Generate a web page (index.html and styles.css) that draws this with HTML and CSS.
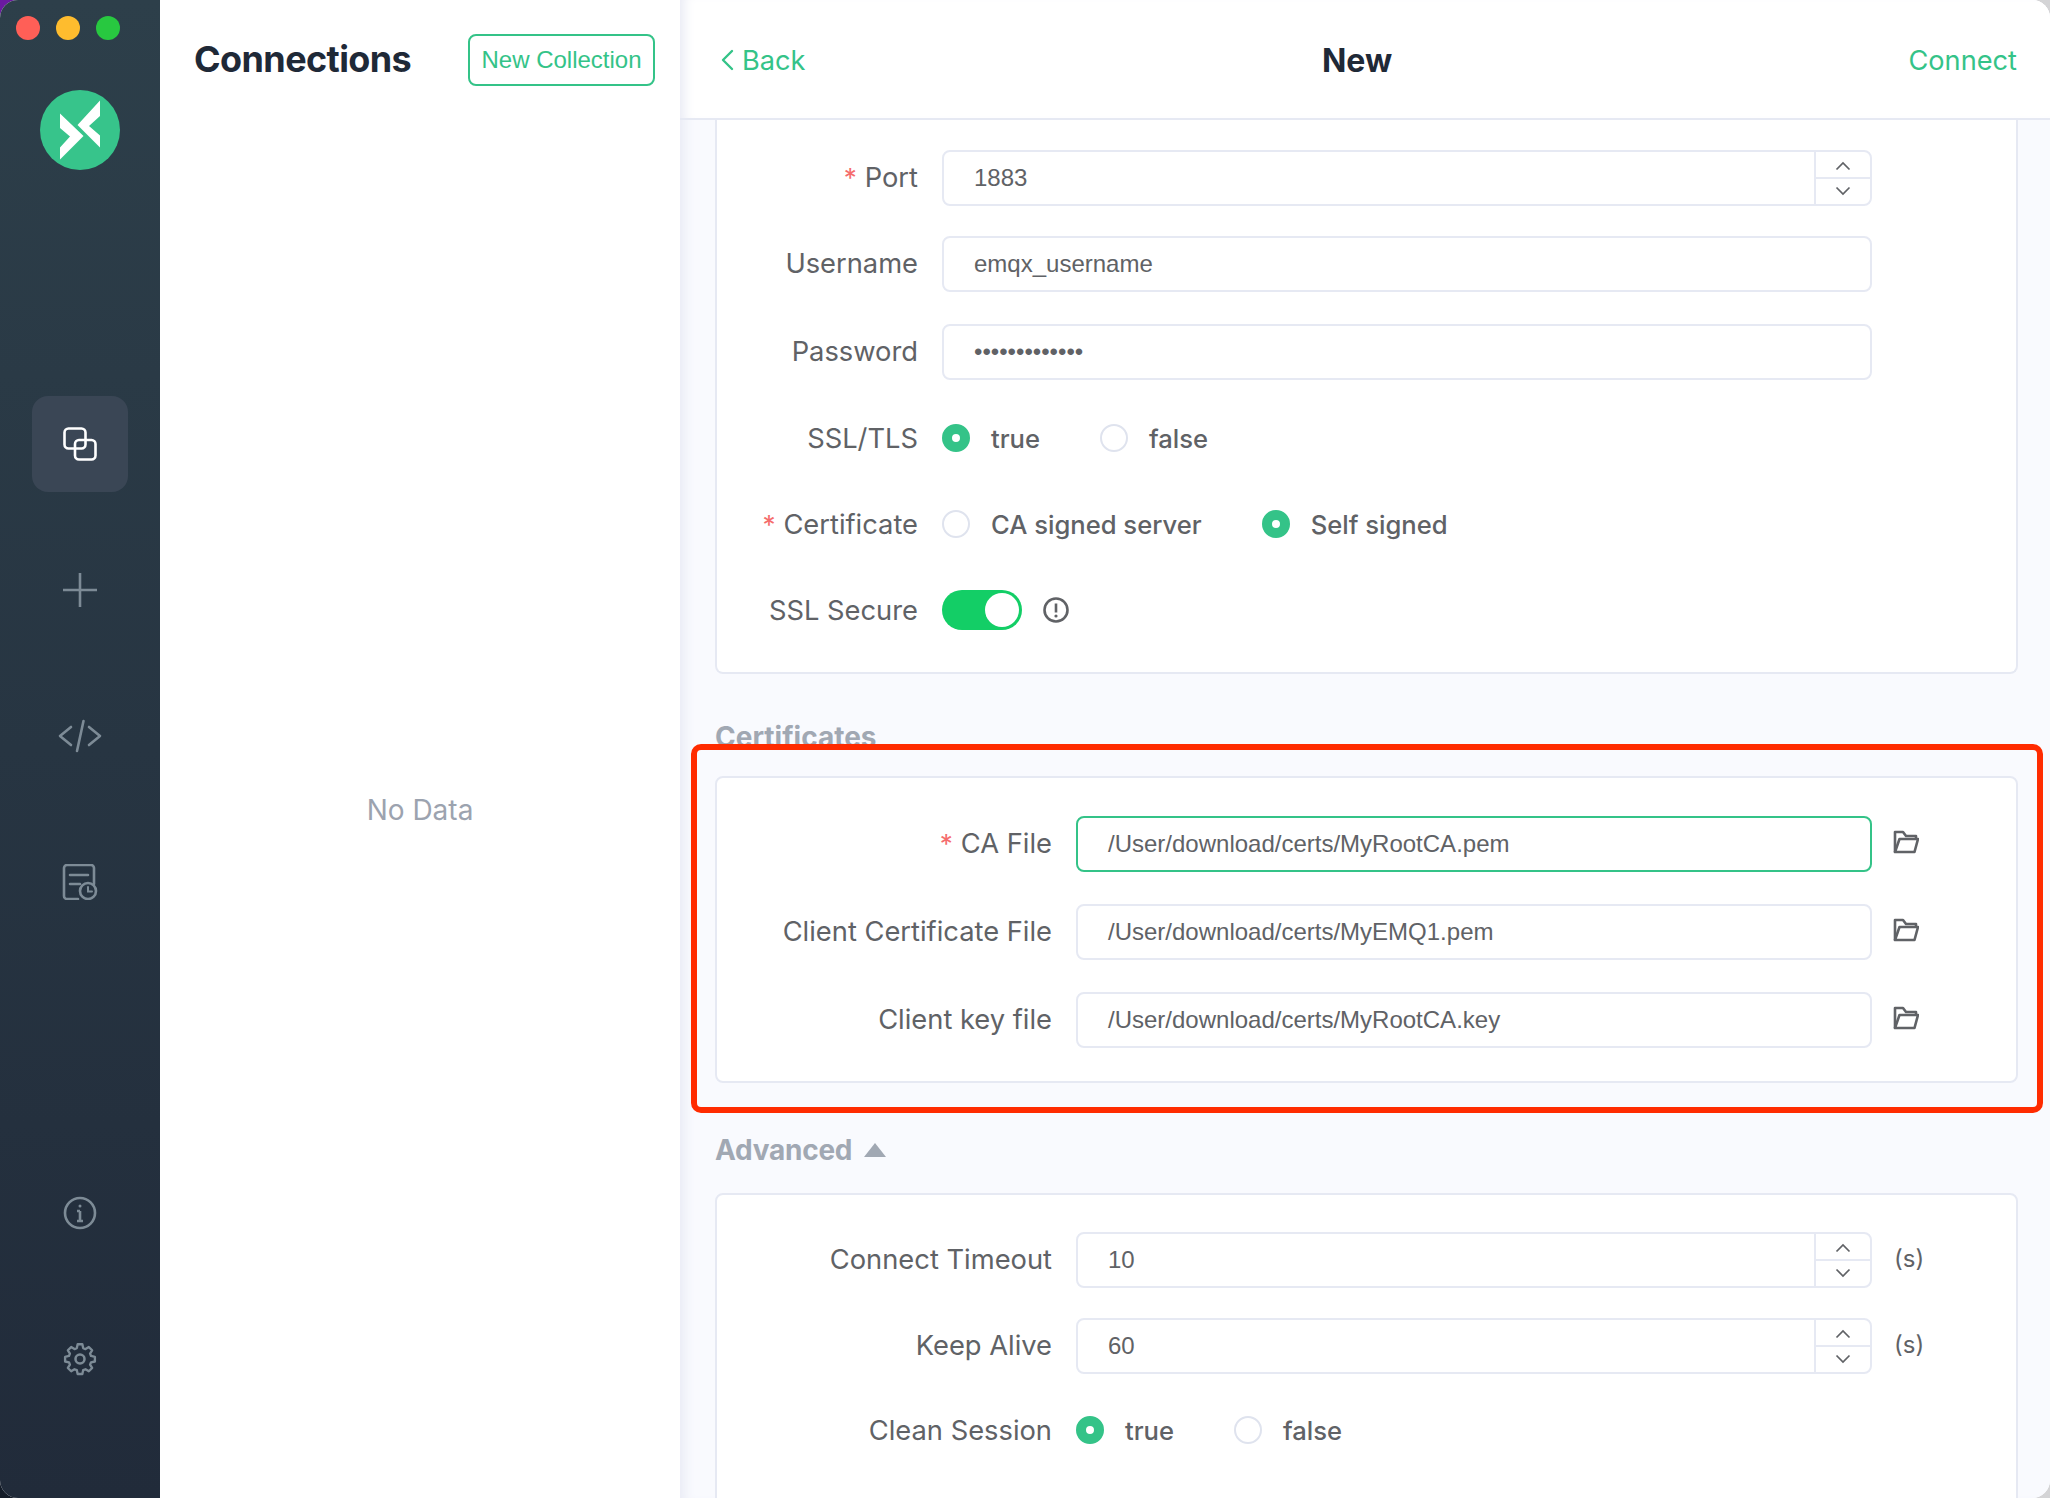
FILE: index.html
```html
<!DOCTYPE html>
<html lang="en">
<head>
<meta charset="utf-8">
<title>MQTT X - New Connection</title>
<link rel="stylesheet" href="styles.css">
</head>
<body>
<div class="window">
  <aside class="sidebar">
    <div class="traffic">
      <span class="light red"></span><span class="light amber"></span><span class="light green"></span>
    </div>
    <div class="logo">
      <svg viewBox="0 0 80 80" width="80" height="80">
        <circle cx="40" cy="40" r="40" fill="#37c48b"/>
        <path d="M20 23.500 43.500 46 20 69.500V57.500L30 46.500 20 38z" fill="#fff"/>
        <path d="M60 10.500V26L49 36 60 45.500V57.500L37.500 35z" fill="#fff"/>
      </svg>
    </div>
    <nav class="nav-top">
      <div class="nav-item active">
        <svg viewBox="0 0 34 34" width="34" height="34" fill="none" stroke="#fff" stroke-width="2.600">
          <rect x="1.500" y="1.500" width="21" height="20" rx="4"/>
          <rect x="12" y="13" width="20.500" height="19.500" rx="4"/>
        </svg>
      </div>
      <div class="nav-item">
        <svg viewBox="0 0 36 36" width="36" height="36" fill="none" stroke="#7d8b96" stroke-width="2.600">
          <path d="M1 18H35M18 1V35"/>
        </svg>
      </div>
      <div class="nav-item">
        <svg viewBox="0 0 44 34" width="44" height="34" fill="none" stroke="#7d8b96" stroke-width="2.600" stroke-linecap="round" stroke-linejoin="round">
          <path d="M13 8 2 17l11 9M31 8l11 9-11 9M25.500 2 19 32"/>
        </svg>
      </div>
      <div class="nav-item">
        <svg viewBox="0 0 36 36" width="36" height="36" fill="none" stroke="#7d8b96" stroke-width="2.600" stroke-linecap="round">
          <path d="M16 35H5a3 3 0 0 1-3-3V4a3 3 0 0 1 3-3h24a3 3 0 0 1 3 3v16"/>
          <path d="M8 11H26M8 20H18"/>
          <circle cx="26" cy="27" r="8"/>
          <path d="M26 23v4.500h4" stroke-width="2"/>
        </svg>
      </div>
    </nav>
    <nav class="nav-bottom">
      <div class="nav-item">
        <svg viewBox="0 0 34 34" width="34" height="34" fill="none" stroke="#7d8b96" stroke-width="2.600">
          <circle cx="17" cy="17" r="15"/>
          <path d="M17 15V25M14 25H20M14 15H17"/>
          <circle cx="17" cy="10" r="1.500" fill="#7d8b96" stroke="none"/>
        </svg>
      </div>
      <div class="nav-item">
        <svg viewBox="0 0 24 24" width="36" height="36" fill="none" stroke="#7d8b96" stroke-width="1.700" stroke-linejoin="round">
          <path d="M10.300 2.500h3.400l.6 2.800 1.700.7 2.400-1.500 2.400 2.400-1.500 2.400.7 1.700 2.800.6v3.400l-2.800.6-.7 1.700 1.500 2.400-2.400 2.400-2.400-1.500-1.700.7-.6 2.800h-3.400l-.6-2.800-1.700-.7-2.400 1.500-2.400-2.400 1.500-2.400-.7-1.700-2.800-.6v-3.400l2.800-.6.7-1.700-1.500-2.400 2.400-2.400 2.400 1.500 1.700-.7z" transform="translate(12 12) scale(.92) translate(-12 -13.200)"/>
          <circle cx="12" cy="12" r="3"/>
        </svg>
      </div>
    </nav>
  </aside>

  <section class="list-panel">
    <header class="list-head">
      <h1 class="list-title">Connections</h1>
      <button class="outline-btn" type="button">New Collection</button>
    </header>
    <div class="empty">No Data</div>
  </section>

  <main class="main">
    <header class="topbar">
      <a class="back">
        <svg viewBox="0 0 14 22" width="14" height="22" fill="none" stroke="#34c388" stroke-width="2.400" stroke-linecap="round" stroke-linejoin="round"><path d="M12 2 3 11l9 9"/></svg>
        Back
      </a>
      <div class="topbar-title">New</div>
      <a class="connect">Connect</a>
    </header>

    <div class="scroll">
      <div class="card card-first">
        <div class="row">
          <label class="label narrow"><span class="req">*</span>Port</label>
          <div class="input num"><span class="val">1883</span>
            <div class="spin">
              <span class="spin-btn"><svg viewBox="0 0 16 10" width="16" height="10" fill="none" stroke="#606266" stroke-width="1.700"><path d="M1.500 8.500 8 2l6.500 6.500"/></svg></span>
              <span class="spin-btn"><svg viewBox="0 0 16 10" width="16" height="10" fill="none" stroke="#606266" stroke-width="1.700"><path d="M1.500 1.500 8 8l6.500-6.500"/></svg></span>
            </div>
          </div>
        </div>
        <div class="row">
          <label class="label narrow">Username</label>
          <div class="input"><span class="val">emqx_username</span></div>
        </div>
        <div class="row row-tall">
          <label class="label narrow">Password</label>
          <div class="input"><span class="val">•••••••••••••</span></div>
        </div>
        <div class="row">
          <label class="label narrow">SSL/TLS</label>
          <div class="radios">
            <span class="radio on"></span><span class="radio-text">true</span>
            <span class="radio"></span><span class="radio-text">false</span>
          </div>
        </div>
        <div class="row">
          <label class="label narrow"><span class="req">*</span>Certificate</label>
          <div class="radios">
            <span class="radio"></span><span class="radio-text">CA signed server</span>
            <span class="radio on"></span><span class="radio-text">Self signed</span>
          </div>
        </div>
        <div class="row">
          <label class="label narrow">SSL Secure</label>
          <span class="switch"><span class="knob"></span></span>
          <svg class="hint" viewBox="0 0 26 26" width="26" height="26" fill="none" stroke="#606266" stroke-width="2.600"><circle cx="13" cy="13" r="11.500"/><path d="M13 6.500v9"/><circle cx="13" cy="19" r="1.600" fill="#606266" stroke="none"/></svg>
        </div>
      </div>

      <h2 class="section-title certs">Certificates</h2>
      <div class="card card-certs">
        <div class="row">
          <label class="label wide"><span class="req">*</span>CA File</label>
          <div class="input focus"><span class="val">/User/download/certs/MyRootCA.pem</span></div>
          <svg class="folder" viewBox="0 0 26 24" width="26" height="24" fill="none" stroke="#606266" stroke-width="2.600" stroke-linejoin="round"><path d="M2 22V2h8l3 4h10v3"/><path d="M2 22h19.500L25 9H6.500L2 22z"/></svg>
        </div>
        <div class="row">
          <label class="label wide">Client Certificate File</label>
          <div class="input"><span class="val">/User/download/certs/MyEMQ1.pem</span></div>
          <svg class="folder" viewBox="0 0 26 24" width="26" height="24" fill="none" stroke="#606266" stroke-width="2.600" stroke-linejoin="round"><path d="M2 22V2h8l3 4h10v3"/><path d="M2 22h19.500L25 9H6.500L2 22z"/></svg>
        </div>
        <div class="row">
          <label class="label wide">Client key file</label>
          <div class="input"><span class="val">/User/download/certs/MyRootCA.key</span></div>
          <svg class="folder" viewBox="0 0 26 24" width="26" height="24" fill="none" stroke="#606266" stroke-width="2.600" stroke-linejoin="round"><path d="M2 22V2h8l3 4h10v3"/><path d="M2 22h19.500L25 9H6.500L2 22z"/></svg>
        </div>
      </div>

      <h2 class="section-title advanced">Advanced <span class="caret"></span></h2>
      <div class="card card-adv">
        <div class="row">
          <label class="label wide">Connect Timeout</label>
          <div class="input num"><span class="val">10</span>
            <div class="spin">
              <span class="spin-btn"><svg viewBox="0 0 16 10" width="16" height="10" fill="none" stroke="#606266" stroke-width="1.700"><path d="M1.500 8.500 8 2l6.500 6.500"/></svg></span>
              <span class="spin-btn"><svg viewBox="0 0 16 10" width="16" height="10" fill="none" stroke="#606266" stroke-width="1.700"><path d="M1.500 1.500 8 8l6.500-6.500"/></svg></span>
            </div>
          </div>
          <span class="unit">(s)</span>
        </div>
        <div class="row">
          <label class="label wide">Keep Alive</label>
          <div class="input num"><span class="val">60</span>
            <div class="spin">
              <span class="spin-btn"><svg viewBox="0 0 16 10" width="16" height="10" fill="none" stroke="#606266" stroke-width="1.700"><path d="M1.500 8.500 8 2l6.500 6.500"/></svg></span>
              <span class="spin-btn"><svg viewBox="0 0 16 10" width="16" height="10" fill="none" stroke="#606266" stroke-width="1.700"><path d="M1.500 1.500 8 8l6.500-6.500"/></svg></span>
            </div>
          </div>
          <span class="unit">(s)</span>
        </div>
        <div class="row row-short">
          <label class="label wide">Clean Session</label>
          <div class="radios">
            <span class="radio on"></span><span class="radio-text">true</span>
            <span class="radio"></span><span class="radio-text">false</span>
          </div>
        </div>
      </div>
    </div>
    <div class="highlight"></div>
  </main>
</div>
</body>
</html>
```
FILE: styles.css
```css
* { box-sizing: border-box; }
html, body { margin: 0; height: 100%; }
body {
  width: 2050px;
  height: 1498px;
  overflow: hidden;
  background:
    linear-gradient(#6a1aa0, #6a1aa0) 0 0 / 20px 20px no-repeat,
    linear-gradient(#141c28, #141c28) 0 100% / 20px 20px no-repeat,
    #d4d4d6;
  font-family: Inter, "Liberation Sans", sans-serif;
  color: #606266;
}
.window {
  display: flex;
  width: 2050px;
  height: 1498px;
  border-radius: 18px;
  overflow: hidden;
  background: #fff;
}
.sidebar {
  width: 160px;
  flex: none;
  display: flex;
  flex-direction: column;
  align-items: center;
  background: linear-gradient(180deg, #2d3f4a 0%, #212b3a 100%);
}
.traffic {
  display: flex;
  gap: 16px;
  align-self: flex-start;
  padding: 16px 0 0 16px;
}
.light { width: 24px; height: 24px; border-radius: 50%; }
.red { background: #ff5f57; }
.amber { background: #febc2e; }
.green { background: #28c840; }
.logo { margin-top: 50px; height: 80px; }
.nav-top { margin-top: 226px; display: flex; flex-direction: column; gap: 50px; }
.nav-bottom { margin-top: auto; padding-bottom: 121px; display: flex; flex-direction: column; gap: 110px; }
.nav-top .nav-item { height: 96px; width: 96px; }
.nav-bottom .nav-item { width: 96px; height: 36px; }
.nav-item { display: flex; align-items: center; justify-content: center; border-radius: 16px; }
.nav-item.active { background: #3a4655; }

.list-panel {
  width: 520px;
  flex: none;
  display: flex;
  flex-direction: column;
  background: #fff;
}
.list-head {
  display: flex;
  align-items: center;
  justify-content: space-between;
  padding: 34px 25px 0 34px;
}
.list-title { margin: 0 0 2px; font-size: 36px; font-weight: 700; color: #1f2937; letter-spacing: -.6px; }
.outline-btn {
  width: 187px;
  height: 52px;
  padding: 0;
  background: #fff;
  border: 2px solid #34c388;
  border-radius: 8px;
  color: #34c388;
  font: 400 24px "Liberation Sans", Arial, sans-serif;
}
.empty { padding-top: 707px; text-align: center; font-size: 28px; color: #9ca3af; }

.main {
  flex: 1;
  min-width: 0;
  position: relative;
  display: flex;
  flex-direction: column;
  background: #f9fafe;
  box-shadow: inset 12px 0 12px -8px #e8eaf4;
}
.topbar {
  height: 120px;
  flex: none;
  display: flex;
  align-items: center;
  justify-content: space-between;
  padding: 2px 33px 0 40px;
  background: #fff;
  border-bottom: 2px solid #e6e9f3;
  box-shadow: inset 12px 0 12px -8px #e8eaf4;
  position: relative;
}
.back, .connect { color: #34c388; font-size: 27.2px; display: flex; align-items: center; gap: 8px; }
.topbar-title { position: absolute; left: 0; right: 16px; text-align: center; font-size: 32px; font-weight: 700; color: #1f2937; }
.connect { position: relative; }

.scroll { flex: 1; padding: 0 32px 0 35px; overflow: hidden; }
.card {
  background: #fff;
  border: 2px solid #e6e9f3;
  border-radius: 8px;
  padding: 37px 0 0;
}
.card-first { border-top: none; border-radius: 0 0 8px 8px; padding: 30px 0 34px; }
.card-certs { padding: 38px 0 35px; height: 307px; }
.card-adv { height: 320px; }

.row {
  display: flex;
  align-items: center;
  min-height: 56px;
  margin-bottom: 32px;
}
.card-first .row, .card-adv .row { margin-bottom: 30px; }
.card-first .row:last-child, .card-certs .row:last-child, .card-adv .row:last-child { margin-bottom: 0; }
.card-first .row-tall { margin-top: 32px; }
.card-first .row:nth-child(2) { margin-bottom: 0; }
.card-adv .row-short { margin-top: -2px; }

.label { flex: none; text-align: right; font-size: 27.3px; color: #606266; }
.label.narrow { width: 225px; padding-right: 24px; }
.label.wide { width: 359px; padding-right: 24px; }
.label:has(+ .input) { padding-bottom: 2px; }
.req { color: #f56c6c; margin-right: 8px; font-size: 26px; }

.input {
  width: 796px;
  height: 56px;
  flex: none;
  display: flex;
  align-items: center;
  justify-content: space-between;
  border: 2px solid #e6e9f3;
  border-radius: 8px;
  background: #fff;
  padding-left: 30px;
  font: 400 24px "Liberation Sans", Arial, sans-serif;
  color: #606266;
}
.label.narrow + .input { width: 930px; }
.input.focus { border-color: #34c388; }
.spin { width: 56px; height: 100%; border-left: 2px solid #e6e9f3; display: flex; flex-direction: column; }
.spin-btn { flex: 1; display: flex; align-items: center; justify-content: center; padding-top: 2px; }
.spin-btn + .spin-btn { border-top: 2px solid #e6e9f3; padding: 0 0 2px; }

.radios { display: flex; align-items: center; }
.radio {
  width: 28px;
  height: 28px;
  border-radius: 50%;
  border: 2px solid #dfe3ee;
  background: #fff;
  flex: none;
}
.radio.on { border: 10px solid #34c388; }
.radio-text { margin: 0 60px 0 21px; font-size: 25.6px; font-weight: 500; color: #606266; }

.switch {
  width: 80px;
  height: 40px;
  border-radius: 20px;
  background: #13ce66;
  display: flex;
  justify-content: flex-end;
  align-items: center;
  padding-right: 3px;
}
.knob { width: 34px; height: 34px; border-radius: 50%; background: #fff; }
.hint { margin-left: 21px; }
.folder { margin: 0 0 4px 21px; }
.unit { margin-left: 22px; padding-bottom: 4px; font-size: 24px; color: #606266; }

.section-title { margin: 0; font-size: 28px; font-weight: 700; color: #a1a8b3; line-height: 34px; }
.certs { margin-top: 46px; margin-bottom: 22px; }
.advanced { margin-top: 50px; margin-bottom: 26px; display: flex; align-items: center; gap: 12px; letter-spacing: -.25px; }
.caret { width: 0; height: 0; border-left: 11px solid transparent; border-right: 11px solid transparent; border-bottom: 14px solid #a1a8b3; }

.highlight {
  position: absolute;
  left: 11px;
  top: 744px;
  width: 1352px;
  height: 369px;
  border: 6px solid #ff2b00;
  border-radius: 10px;
  pointer-events: none;
}
```
